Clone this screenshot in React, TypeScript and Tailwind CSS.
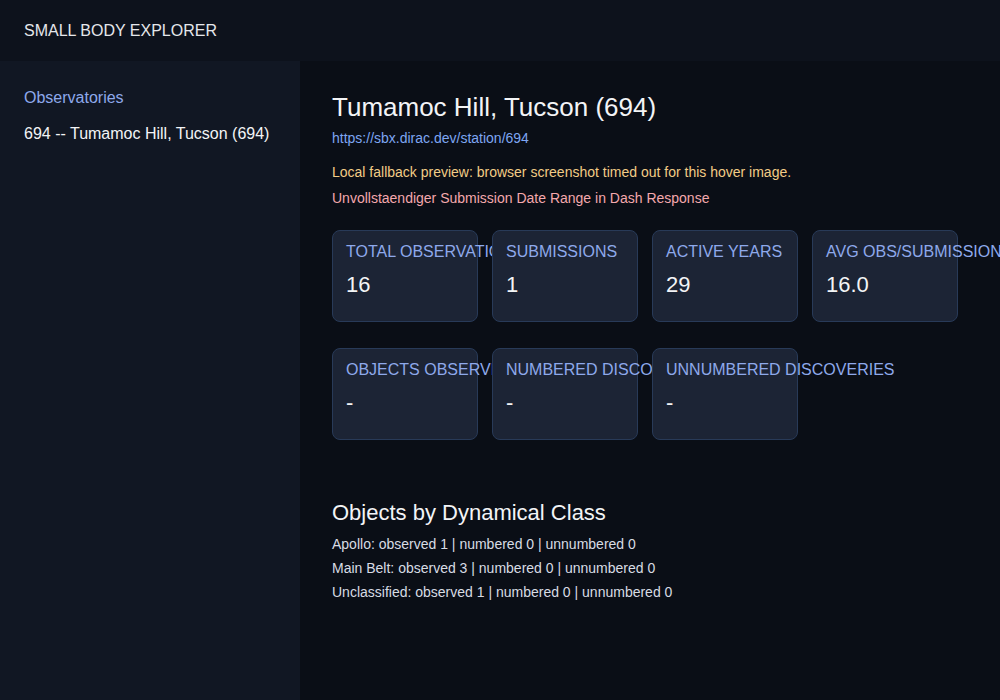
import React from 'react';

const stats = [
  { label: 'Total Observations', value: '16' },
  { label: 'Submissions', value: '1' },
  { label: 'Active Years', value: '29' },
  { label: 'Avg Obs/Submission', value: '16.0' },
  { label: 'Objects Observed', value: '-' },
  { label: 'Numbered Discoveries', value: '-' },
  { label: 'Unnumbered Discoveries', value: '-' },
];

const classes = [
  'Apollo: observed 1 | numbered 0 | unnumbered 0',
  'Main Belt: observed 3 | numbered 0 | unnumbered 0',
  'Unclassified: observed 1 | numbered 0 | unnumbered 0',
];

export default function App() {
  return (
    <div className="h-[700px] w-[1000px] overflow-hidden bg-[#0a0e16] font-['Liberation_Sans'] text-[#e5e7eb]">
      <header className="flex h-[61px] items-center bg-[#0d121c] px-6 text-base">
        SMALL BODY EXPLORER
      </header>
      <div className="flex h-[639px]">
        <aside className="w-[300px] shrink-0 bg-[#111723] px-6 pt-[28px]">
          <div className="text-base leading-[18px] text-[#8ea9eb]">Observatories</div>
          <div className="mt-[18px] text-base leading-[18px] text-[#f3f4f6]">694 -- Tumamoc Hill, Tucson (694)</div>
        </aside>
        <main className="flex-1 px-8 pt-[30px]">
          <h1 className="text-[26px] leading-8 text-[#f3f4f6]">Tumamoc Hill, Tucson (694)</h1>
          <a className="mt-[7px] block text-sm leading-4 text-[#7ea6f2]">https://sbx.dirac.dev/station/694</a>
          <p className="mt-[18px] text-sm leading-4 text-[#f2cc86]">Local fallback preview: browser screenshot timed out for this hover image.</p>
          <p className="mt-[10px] text-sm leading-4 text-[#f4a8ad]">Unvollstaendiger Submission Date Range in Dash Response</p>
          <div className="mt-[24px] flex w-[636px] flex-wrap gap-x-[14px] gap-y-[26px]">
            {stats.map((s) => (
              <div
                key={s.label}
                className="h-[92px] w-[146px] rounded-lg border border-[#283a58] bg-[#1c2435] px-[13px] pt-[12px]"
              >
                <div className="whitespace-nowrap text-base leading-[18px] uppercase text-[#8ea9eb]">{s.label}</div>
                <div className="mt-[11px] text-[22px] leading-[26px] text-[#f3f4f6]">{s.value}</div>
              </div>
            ))}
          </div>
          <h2 className="mt-[59px] text-[22px] leading-7 text-[#f3f4f6]">Objects by Dynamical Class</h2>
          <div className="mt-[9px] flex flex-col gap-[8px] text-sm leading-4 text-[#d8dce4]">
            {classes.map((c) => (
              <div key={c}>{c}</div>
            ))}
          </div>
        </main>
      </div>
    </div>
  );
}
